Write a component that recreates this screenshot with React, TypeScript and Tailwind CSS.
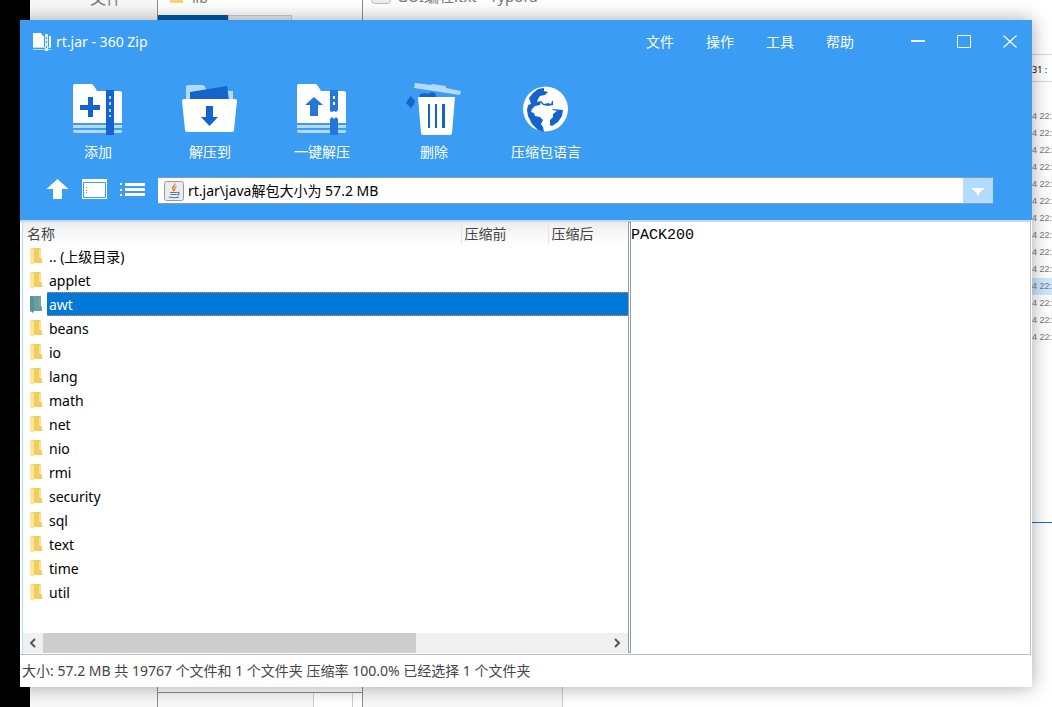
import { useState } from "react"

const folders = [
  ".. (上级目录)",
  "applet",
  "awt",
  "beans",
  "io",
  "lang",
  "math",
  "net",
  "nio",
  "rmi",
  "security",
  "sql",
  "text",
  "time",
  "util",
]

const menus = ["文件", "操作", "工具", "帮助"]

function AddIcon() {
  return (
    <svg width="52" height="52" viewBox="0 0 52 52">
      <path d="M1 2q0-2 2-2h16q2 0 3 2l3 5h23q2 0 2 2v30H1z" fill="#fff" />
      <path d="M1 41h49v3H1zM1 46h49v1q0 2-2 2H3q-2 0-2-2z" fill="#b3dbff" />
      <path d="M34 6h8v45h-8z" fill="#1464cc" />
      <path d="M37 12h2v3h-2zM37 18h2v3h-2zM37 25h2v3h-2zM37 31h2v2h-2z" fill="#b3dbff" />
      <path d="M16 13h5v8h7v5h-7v7h-5v-7H8v-5h8z" fill="#1464cc" />
    </svg>
  )
}

function ExtractToIcon() {
  return (
    <svg width="56" height="52" viewBox="0 0 56 52">
      <path d="M4 3q0-2 2-2h14q4 0 4 6h27v8H4z" fill="#b3dbff" />
      <path d="M8 8l37-6 2 14H8z" fill="#1464cc" />
      <path d="M0 17q0-2 2-2h51q2 0 2 2l-3 29q0 2-2 2H5q-2 0-2-2z" fill="#fff" />
      <path d="M24 22h7v11h5L27.500 42 19 33h5z" fill="#1464cc" />
    </svg>
  )
}

function ExtractIcon() {
  return (
    <svg width="52" height="52" viewBox="0 0 52 52">
      <path d="M1 2q0-2 2-2h16q2 0 3 2l3 5h23q2 0 2 2v30H1z" fill="#fff" />
      <path d="M1 41h49v3H1zM1 46h49v1q0 2-2 2H3q-2 0-2-2z" fill="#b3dbff" />
      <path d="M34 6h8v20l-2 2-2-1-2 1-2-1zM34 35l2-2 2 2 2-2 2 2v16h-8z" fill="#2476d8" />
      <path d="M37 12h2v3h-2zM37 18h2v3h-2z" fill="#fff" />
      <path d="M18 13l9 8h-5v11h-8V21H9z" fill="#2476d8" />
    </svg>
  )
}

function DeleteIcon() {
  return (
    <svg width="56" height="52" viewBox="0 0 56 52" overflow="visible">
      <path d="M9-1l16 2 1-1 14 2v2l15 3-1 4L8 4z" fill="#b3dbff" />
      <path d="M13 14l1-4 5-1 3 1 3-2 4 1 2 5z" fill="#1464cc" />
      <path d="M0 19l3-5 2-2 2 3 2 1-1 5-2 1-1 3-2-3z" fill="#1464cc" />
      <path d="M12 13h37l-3 36q0 2-2 2H17q-2 0-2-2z" fill="#fff" />
      <path d="M22 20h2v24h-2zM29 20h2v24h-2zM36 20h3v24h-3z" fill="#1464cc" />
    </svg>
  )
}

function GlobeIcon() {
  return (
    <svg width="48" height="52" viewBox="0 0 48 52">
      <circle cx="23.500" cy="25" r="22.500" fill="#fff" />
      <path
        d="M7 14l4-5 5-4 6-1v3l4 1-3 3-5 1-2 3-1 3 4-1-1 4-5 1-3 3-1 3 3 1 1 3 5 1 3 3-2 4 2 3 1 5-6-2-6-6-4-8-1-6 1-5 3-1z"
        fill="#1464cc"
      />
      <path d="M19 17l3 3 4-1 3 1 1-3h1v4l-5 1-5-1-3-3z" fill="#1464cc" />
      <path d="M30 25l11 1-1 6-4 6-6 4-2-1v-5l3-3v-3l4-3-4-1z" fill="#1464cc" />
    </svg>
  )
}

const tools = [
  { label: "添加", icon: <AddIcon /> },
  { label: "解压到", icon: <ExtractToIcon /> },
  { label: "一键解压", icon: <ExtractIcon /> },
  { label: "删除", icon: <DeleteIcon /> },
  { label: "压缩包语言", icon: <GlobeIcon /> },
]

function Logo() {
  return (
    <svg width="20" height="20" viewBox="0 0 20 20">
      <path d="M1 1h8l2 3h1v11H1zM17 4h2v11h-2z" fill="#fff" />
      <path d="M1 15h18v1H1zM1 17h18v1H1z" fill="#b3dbff" />
      <path d="M13 2h3v17h-3z" fill="#d8edff" />
      <path d="M14 5h1v2h-1zM14 9h1v2h-1zM14 14h1v2h-1z" fill="#3a9cf2" />
    </svg>
  )
}

function JavaIcon() {
  return (
    <svg width="20" height="20" viewBox="0 0 20 20" className="shrink-0">
      <rect x="0.500" y="0.500" width="19" height="19" rx="2" fill="#e9ebee" stroke="#979ca3" />
      <path d="M10.500 2.500c2 2-3.500 3-1.500 5.500 1 1 1 1.500 0 2.500M12.500 5.500c-2 1-2.500 2-1.500 4" fill="none" stroke="#ee7a25" strokeWidth="1.300" />
      <path d="M6 11.500h7M6.500 13.500h6M5 16q5 1.500 10 0M13.500 11.500c2-.5 2 2-.5 2.500" fill="none" stroke="#52779b" strokeWidth="1.200" />
    </svg>
  )
}

function FolderIcon({ selected }: { selected: boolean }) {
  return (
    <svg width="12" height="17" viewBox="0 0 12 17" className="shrink-0">
      <path d="M2 0h9v10l1 1v4H2z" fill={selected ? "#6d9c9c" : "#f2cd62"} />
      <path d="M9 1h2v9H9z" fill={selected ? "#79aaa8" : "#fbe08a"} />
      <path d="M0 0h2l2 2v13l-1 2-3-2z" fill={selected ? "#5d8f97" : "#fde49b"} />
    </svg>
  )
}

// windows that stay visible around the edges of the main one
function Desktop() {
  return (
    <div className="absolute inset-0 flex overflow-hidden text-[#777]" aria-hidden="true">
      <div className="w-[30px] bg-black" />
      <div className="w-32 border-r border-[#8c8c8c] bg-[#f8f8f8] pl-[60px]">
        <div className="-mt-3 text-base leading-5">文件</div>
      </div>
      <div className="flex w-[205px] flex-col justify-between border-r border-[#8c8c8c]">
        <div>
          <div className="-mt-3 flex h-[27px] gap-2 pl-3 text-sm leading-5">
            <svg width="14" height="16" viewBox="0 0 14 16">
              <path d="M0 3h5l2 2h6v10H0z" fill="#f8d775" />
            </svg>
            lib
          </div>
          <div className="flex h-5">
            <div className="w-[70px] bg-[#005a9e]" />
            <div className="w-16 border border-[#ccc] bg-[#eee]" />
          </div>
        </div>
        <div className="flex h-[15px] border-t border-[#8c8c8c]">
          <div className="w-[155px] bg-[#f8f8f8]" />
          <div className="w-10 border-x border-[#ccc]" />
        </div>
      </div>
      <div className="flex w-[200px] flex-col justify-between">
        <div className="-mt-4 flex gap-1.5 pl-2 text-[15px] leading-6 whitespace-nowrap">
          <div className="h-5 w-5 rounded border border-[#bbb] bg-[#eee]" />
          GUI编程.txt - Typora
        </div>
        <div className="h-5 border-r border-[#ccc] bg-[#f8f8f8]" />
      </div>
      <div className="ml-auto w-5 pt-[54px] text-[9px] leading-[17px] whitespace-nowrap">
        <div className="h-7 border-y border-[#d5d5d5] pt-1.5 text-black">31 :</div>
        <div className="pt-[26px] font-['Liberation_Sans',sans-serif]">
          {Array.from({ length: 14 }).map((_, i) => (
            <div key={i} className={i === 10 ? "bg-[#cce8ff]" : ""}>
              4 22:
            </div>
          ))}
        </div>
        <div className="mt-44 border-t border-[#1a66d0]" />
      </div>
    </div>
  )
}

export default function App() {
  const [selected, setSelected] = useState("awt")
  const [path, setPath] = useState("rt.jar\\java解包大小为 57.2 MB")

  return (
    <div className="relative flex min-h-screen bg-white p-5 font-['Noto_Sans','Noto_Sans_CJK_SC',sans-serif] text-sm">
      <Desktop />
      <div className="relative flex min-w-0 flex-1 flex-col bg-white shadow-[0_0_18px_rgba(0,0,0,0.35)]">
        <header className="h-[200px] bg-[#3a9cf2] text-white">
          <div className="flex h-11 items-center">
            <div className="flex flex-1 items-center gap-1 pl-3">
              <Logo />
              <h1>rt.jar - 360 Zip</h1>
            </div>
            <nav className="mr-[25px] flex">
              {menus.map((menu) => (
                <button key={menu} className="w-[60px]">
                  {menu}
                </button>
              ))}
            </nav>
            <button aria-label="最小化" className="flex h-11 w-[46px] items-center justify-center">
              <svg width="14" height="14" viewBox="0 0 14 14">
                <path d="M0 5h14v2H0z" fill="#fff" />
              </svg>
            </button>
            <button aria-label="最大化" className="flex h-11 w-[46px] items-center justify-center">
              <svg width="14" height="14" viewBox="0 0 14 14">
                <path d="M.5.5h13v12H.5z" fill="none" stroke="#fff" />
              </svg>
            </button>
            <button aria-label="关闭" className="flex h-11 w-[45px] items-center justify-center">
              <svg width="14" height="14" viewBox="0 0 14 14">
                <path d="M.5.5l13 12M13.500.5l-13 12" stroke="#fff" strokeWidth="1.200" />
              </svg>
            </button>
          </div>

          <div className="flex pt-5 pl-[22px]">
            {tools.map((tool) => (
              <button key={tool.label} className="flex w-28 flex-col items-center gap-1.5 leading-5">
                {tool.icon}
                {tool.label}
              </button>
            ))}
          </div>

          <div className="flex items-start pt-[15px] pr-[39px] pl-[26px]">
            <div className="flex w-28 items-center gap-3 pt-0.5">
              <button aria-label="上级目录">
                <svg width="24" height="20" viewBox="0 0 24 20">
                  <path d="M11.500 0L22.500 10H16v10H7V10H.5z" fill="#fff" />
                </svg>
              </button>
              <button aria-label="预览">
                <svg width="25" height="20" viewBox="0 0 25 20">
                  <path d="M0 0h25v20H0z" fill="#fff" />
                  <path d="M1.500 3.500h22v15h-22z" fill="none" stroke="#3a9cf2" />
                  <path d="M4 8h1v1H4zM4 11h1v1H4zM4 13h1v1H4z" fill="#3a9cf2" />
                </svg>
              </button>
              <button aria-label="列表">
                <svg width="26" height="20" viewBox="0 0 26 20">
                  <path d="M1 4h2v2H1zM1 10h2v2H1zM1 15h2v2H1zM6 4h20v3H6zM6 9h20v3H6zM6 14h20v3H6z" fill="#fff" />
                </svg>
              </button>
            </div>
            <div className="flex h-[27px] flex-1 items-center border-y border-[#7f9dbd] bg-white pl-1.5">
              <JavaIcon />
              <input
                aria-label="路径"
                value={path}
                onChange={(e) => setPath(e.target.value)}
                className="min-w-0 flex-1 px-1 text-black outline-none"
              />
              <button aria-label="展开" className="flex h-full w-[30px] items-center justify-center bg-[#b3dbff]">
                <svg width="12" height="8" viewBox="0 0 12 8">
                  <path d="M0 1h12v1L7 6v2H5V6L0 2z" fill="#fff" />
                </svg>
              </button>
            </div>
          </div>
        </header>

        <main className="mr-px flex flex-1 border-t-2 border-r border-b border-t-[#c5d9ec] border-r-[#bbb] border-b-[#bbb]">
          <section className="ml-0.5 flex w-3/5 flex-col border-l border-[#b3dbff]">
            <table className="w-full table-fixed border-collapse">
              <thead>
                <tr className="bg-linear-to-b from-[#ededed] to-white text-left text-[#444]">
                  <th className="p-0 pt-0.5 pl-1 leading-5 font-normal">名称</th>
                  <th className="w-[87px] border-l border-[#e4e4e8] p-0 pt-0.5 pl-[3px] leading-5 font-normal">压缩前</th>
                  <th className="w-20 border-l border-[#e4e4e8] p-0 pt-0.5 pl-[3px] leading-5 font-normal">压缩后</th>
                </tr>
              </thead>
              <tbody>
                {folders.map((name) => {
                  const active = name === selected
                  return (
                    <tr key={name} className="cursor-default" onClick={() => setSelected(name)}>
                      <td className="p-0" colSpan={3}>
                        <div className="flex h-6 items-center gap-[5px] pl-[7px]">
                          <FolderIcon selected={active} />
                          {active ? (
                            <div className="flex-1 bg-[repeating-linear-gradient(to_right,#ff8728_0_1px,#0078d7_1px_2px)] py-px text-white">
                              <div className="h-[22px] bg-[#0078d7] pl-0.5 leading-6">{name}</div>
                            </div>
                          ) : (
                            <div className="h-6 flex-1 pt-px pl-0.5 leading-6 text-black">{name}</div>
                          )}
                        </div>
                      </td>
                    </tr>
                  )
                })}
              </tbody>
            </table>
            <div className="mt-auto mb-px flex h-5 bg-[#f0f0f0]">
              <button aria-label="向左滚动" className="flex w-5 items-center justify-center">
                <svg width="8" height="10" viewBox="0 0 8 10">
                  <path d="M6 1L2 5l4 4" fill="none" stroke="#555" strokeWidth="2" />
                </svg>
              </button>
              <div className="flex-1">
                <div className="h-full w-[66%] bg-[#cdcdcd]" />
              </div>
              <button aria-label="向右滚动" className="flex w-5 items-center justify-center">
                <svg width="8" height="10" viewBox="0 0 8 10">
                  <path d="M1 1l4 4-4 4" fill="none" stroke="#555" strokeWidth="2" />
                </svg>
              </button>
            </div>
          </section>
          <div className="mb-px w-[3px] border border-[#8c9ab4]" />
          <section className="flex-1 pt-1 font-['Liberation_Mono',monospace] text-[15px] leading-5 text-black">
            PACK200
          </section>
        </main>

        <footer className="h-8 px-0.5 leading-8 text-[#444]">
          大小: 57.2 MB 共 19767 个文件和 1 个文件夹 压缩率 100.0% 已经选择 1 个文件夹
        </footer>
      </div>
    </div>
  )
}
